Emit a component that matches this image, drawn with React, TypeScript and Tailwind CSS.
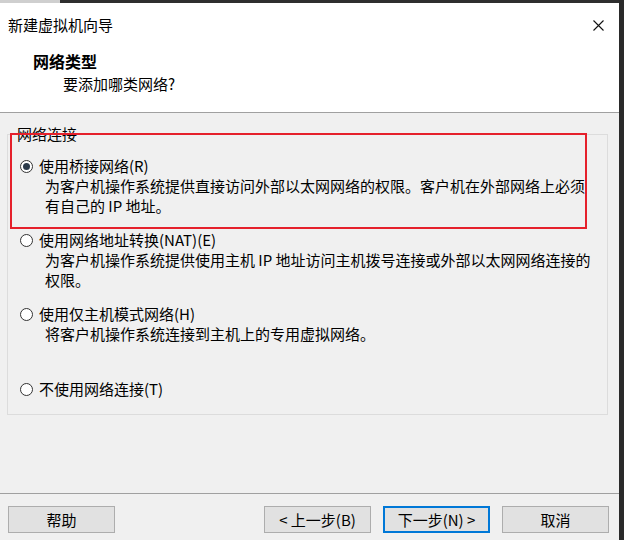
import React from "react";

const font = { fontFamily: '"Noto Sans CJK SC", "Noto Sans", sans-serif' };

function Radio({ checked }: { checked?: boolean }) {
  return (
    <span className="flex h-[13px] w-[13px] shrink-0 items-center justify-center rounded-full border border-[#333333] bg-white">
      {checked && <span className="h-[7px] w-[7px] rounded-full bg-[#2b3a4a]" />}
    </span>
  );
}

function Option({
  label,
  lines,
  checked,
  className,
}: {
  label: string;
  lines: string[];
  checked?: boolean;
  className?: string;
}) {
  return (
    <div className={"flex flex-col " + (className ?? "")}>
      <div className="flex items-center gap-[6px] leading-[20px]">
        <Radio checked={checked} />
        <span>{label}</span>
      </div>
      {lines.map((l, i) => (
        <div key={i} className="pl-[25px] leading-[20px]">
          {l}
        </div>
      ))}
    </div>
  );
}

function Btn({ children, primary }: { children: React.ReactNode; primary?: boolean }) {
  return (
    <button
      className={
        "flex h-[27px] w-[107px] items-center justify-center bg-[#e1e1e1] text-[15px] leading-[20px] text-black " +
        (primary
          ? "border border-[#0078d7] shadow-[inset_0_0_0_1px_#0078d7]"
          : "border border-[#adadad]")
      }
    >
      {children}
    </button>
  );
}

export default function App() {
  return (
    <div className="flex h-[540px] w-[624px] overflow-hidden bg-[#f0f0f0] text-[15px] text-black" style={font}>
      <div className="flex w-[619px] flex-col">
        <div className="flex h-[3px]">
          <div className="w-[60px] bg-[#cfcfcf]" />
          <div className="flex-1 bg-[#2e2e2e]" />
        </div>
        <div className="flex h-[110px] flex-col border-b border-[#a0a0a0] bg-white">
          <div className="mt-[12px] flex items-center justify-between pl-[8px] pr-[15px] leading-[20px]">
            <span>新建虚拟机向导</span>
            <svg width="11" height="11" viewBox="0 0 11 11">
              <path d="M0.5 0.5 L10.5 10.5 M10.5 0.5 L0.5 10.5" stroke="#111" strokeWidth="1.1" />
            </svg>
          </div>
          <div className="mt-[16px] pl-[33px] text-[16px] font-bold leading-[20px]">网络类型</div>
          <div className="mt-[3px] pl-[63px] leading-[20px]">要添加哪类网络?</div>
        </div>
        <div className="relative flex-1">
          <fieldset className="ml-[7px] mt-[11px] h-[291px] w-[601px] border border-[#dcdcdc] px-0">
            <legend className="ml-[9px] px-0 leading-[20px]">网络连接</legend>
            <div className="flex flex-col pl-[12px]">
              <Option
                className="mt-[12px]"
                checked
                label="使用桥接网络(R)"
                lines={[
                  "为客户机操作系统提供直接访问外部以太网网络的权限。客户机在外部网络上必须",
                  "有自己的 IP 地址。",
                ]}
              />
              <Option
                className="mt-[14px]"
                label="使用网络地址转换(NAT)(E)"
                lines={[
                  "为客户机操作系统提供使用主机 IP 地址访问主机拨号连接或外部以太网网络连接的",
                  "权限。",
                ]}
              />
              <Option
                className="mt-[14px]"
                label="使用仅主机模式网络(H)"
                lines={["将客户机操作系统连接到主机上的专用虚拟网络。"]}
              />
              <Option className="mt-[35px]" label="不使用网络连接(T)" lines={[]} />
            </div>
          </fieldset>
          <div className="absolute left-[10px] top-[20px] h-[96px] w-[577px] border-2 border-[#e5202b]" />
        </div>
        <div className="flex h-[47px] items-start border-t border-[#a0a0a0] pl-[8px] pt-[12px]">
          <Btn>帮助</Btn>
          <div className="ml-[149px]">
            <Btn>&lt; 上一步(B)</Btn>
          </div>
          <div className="ml-[12px]">
            <Btn primary>下一步(N) &gt;</Btn>
          </div>
          <div className="ml-[12px]">
            <Btn>取消</Btn>
          </div>
        </div>
      </div>
      <div className="w-[5px] bg-[#2a2a2a]" />
    </div>
  );
}
